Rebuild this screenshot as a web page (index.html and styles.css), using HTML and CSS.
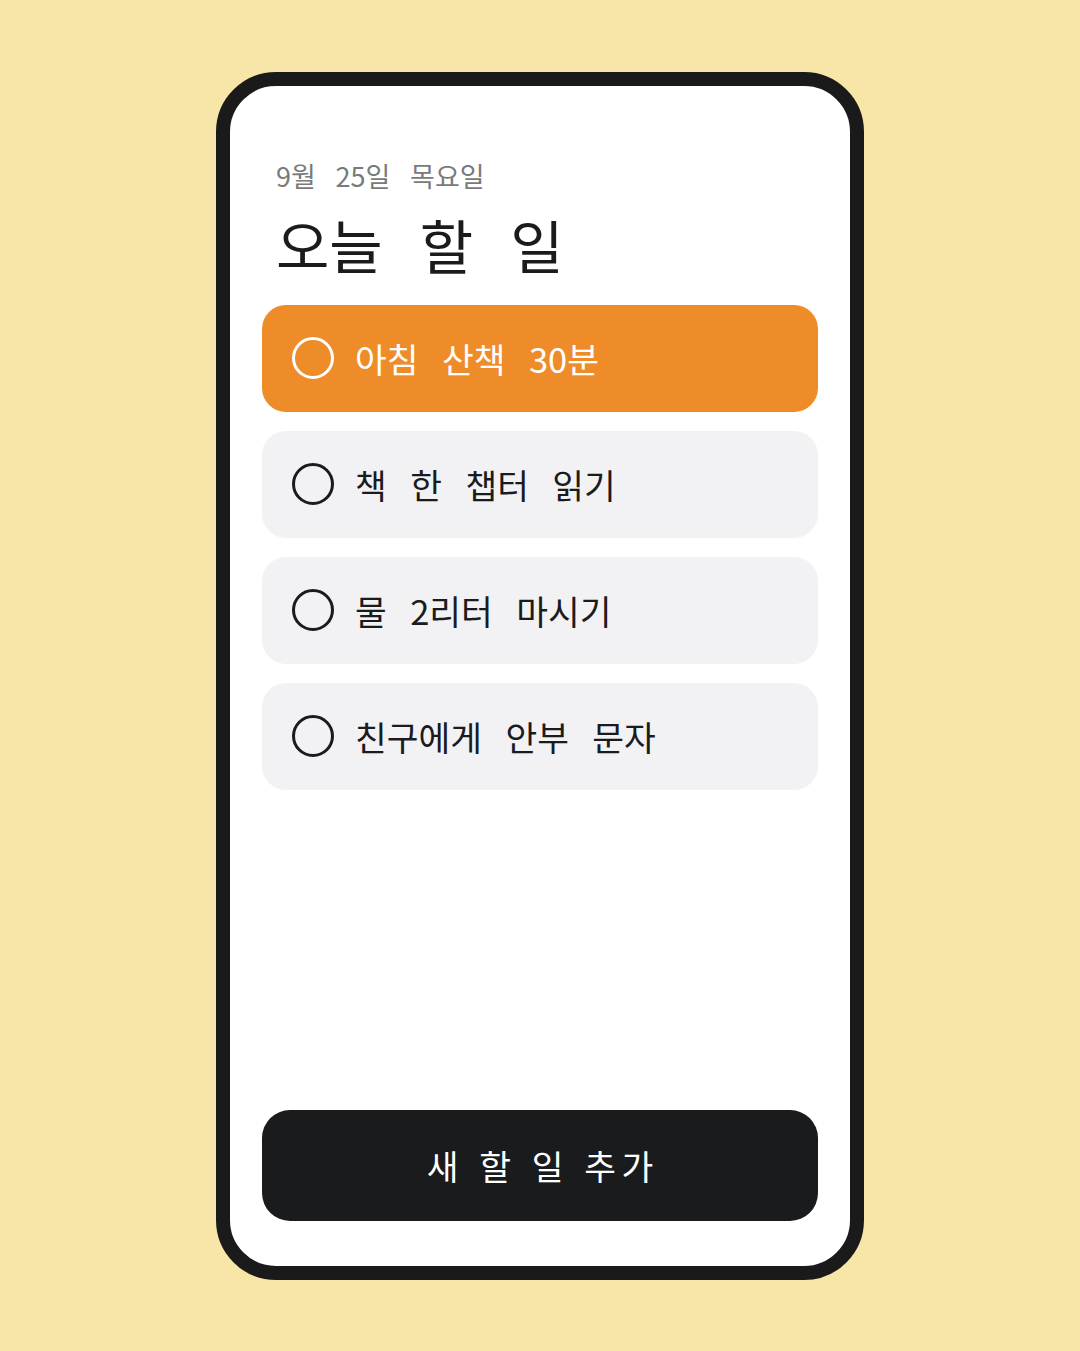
FILE: index.html
```html
<!DOCTYPE html>
<html lang="ko">
<head>
    <meta charset="UTF-8">
    <title>오늘 할 일</title>
    <link rel="stylesheet" href="styles.css">
</head>
<body>
<div class="phone">
    <div class="head">
        <p class="date">9월 25일 목요일</p>
        <h1 class="title">오늘 할 일</h1>
    </div>
    <ul class="list">
        <li class="item on"><span class="check"></span>아침 산책 30분</li>
        <li class="item"><span class="check"></span>책 한 챕터 읽기</li>
        <li class="item"><span class="check"></span>물 2리터 마시기</li>
        <li class="item"><span class="check"></span>친구에게 안부 문자</li>
    </ul>
    <button class="add">새 할 일 추가</button>
</div>
</body>
</html>
```

FILE: styles.css
```css
*{
    margin:0;
    padding:0;
    list-style: none;
    box-sizing: border-box;
}
body{
    width: 1080px;
    height: 1351px;
    background: #f8e6a8;
    display: flex;
    align-items: center;
    justify-content: center;
    font-family: "Noto Sans CJK KR", "Noto Sans", sans-serif;
    color: #1a1b1d;
}
.phone{
    width: 648px;
    height: 1208px;
    border: 14px solid #1a1a1a;
    border-radius: 60px;
    background: #fff;
    padding: 72px 32px 45px;
    display: flex;
    flex-direction: column;
}
.head{
    padding-left: 14px;
}
.date{
    font-size: 27px;
    line-height: 36px;
    color: #7a7a7a;
    word-spacing: 0.45em;
}
.title{
    font-size: 58px;
    font-weight: 400;
    line-height: 72px;
    word-spacing: 0.36em;
    margin-top: 14px;
}
.list{
    margin-top: 25px;
    display: flex;
    flex-direction: column;
    gap: 19px;
}
.item{
    height: 107px;
    border-radius: 24px;
    background: #f2f2f4;
    display: flex;
    align-items: center;
    padding: 0 30px;
    gap: 21px;
    font-size: 34.5px;
    word-spacing: 0.4em;
}
.item.on{
    background: #ef8c2a;
    color: #fff;
}
.check{
    width: 42px;
    height: 42px;
    border: 3.5px solid currentColor;
    border-radius: 50%;
    flex-shrink: 0;
}
.add{
    margin-top: auto;
    height: 111px;
    border: none;
    border-radius: 28px;
    background: #1a1b1d;
    color: #fff;
    font-family: inherit;
    font-size: 34.5px;
    letter-spacing: 0.16em;
    padding-left: 0.16em;
}
```
